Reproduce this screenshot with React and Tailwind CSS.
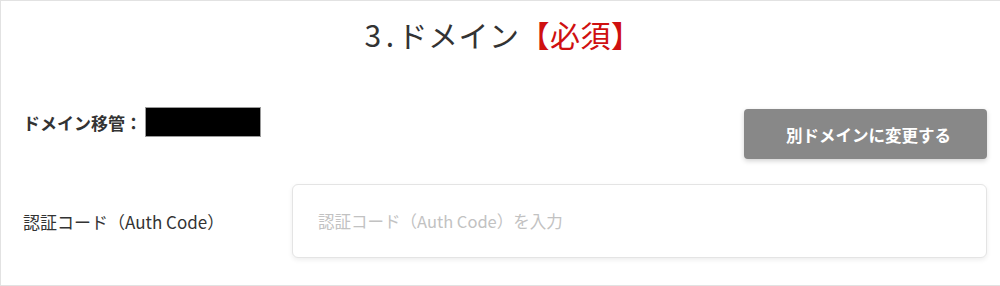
export default function App() {
  const font = { fontFamily: '"Noto Sans CJK JP", "Noto Sans", sans-serif' };
  return (
    <div
      className="w-[1000px] h-[286px] bg-white border-t border-l border-b border-[#e2e2e2] flex flex-col"
      style={font}
    >
      <div className="h-[66px] flex items-center justify-center pl-[5px] text-[30px] leading-none text-[#333333] tracking-[0.5px]">
        <span>3</span>
        <span className="ml-[4px] mr-[3px]">.</span>
        <span>ドメイン</span>
        <span className="text-[#cf1010]">【必須】</span>
      </div>
      <div className="mt-[40px] flex items-start justify-between pl-[22px] pr-[13px]">
        <div className="flex items-center h-[30px]">
          <span className="text-[17px] font-bold text-[#333333] leading-none">ドメイン移管：</span>
          <div className="ml-[3px] w-[116px] h-[30px] bg-black border border-[#9a9a9a]" />
        </div>
        <button className="mt-[2px] w-[243px] h-[50px] rounded-[4px] bg-[#888888] text-white text-[16.5px] font-bold shadow-[0_2px_5px_rgba(0,0,0,0.18)] flex items-center justify-center pt-[2px] pl-[6px]">
          別ドメインに変更する
        </button>
      </div>
      <div className="mt-[25px] flex items-center pl-[22px] pr-[13px]">
        <div className="w-[269px] text-[17px] text-[#333333] leading-none">認証コード（Auth Code）</div>
        <div className="flex-1 h-[74px] rounded-[6px] border border-[#e4e4e4] bg-white shadow-[0_2px_5px_rgba(0,0,0,0.07)] flex items-center pl-[25px]">
          <span className="text-[16.5px] text-[#c2c2c2] leading-none">認証コード（Auth Code）を入力</span>
        </div>
      </div>
    </div>
  );
}
